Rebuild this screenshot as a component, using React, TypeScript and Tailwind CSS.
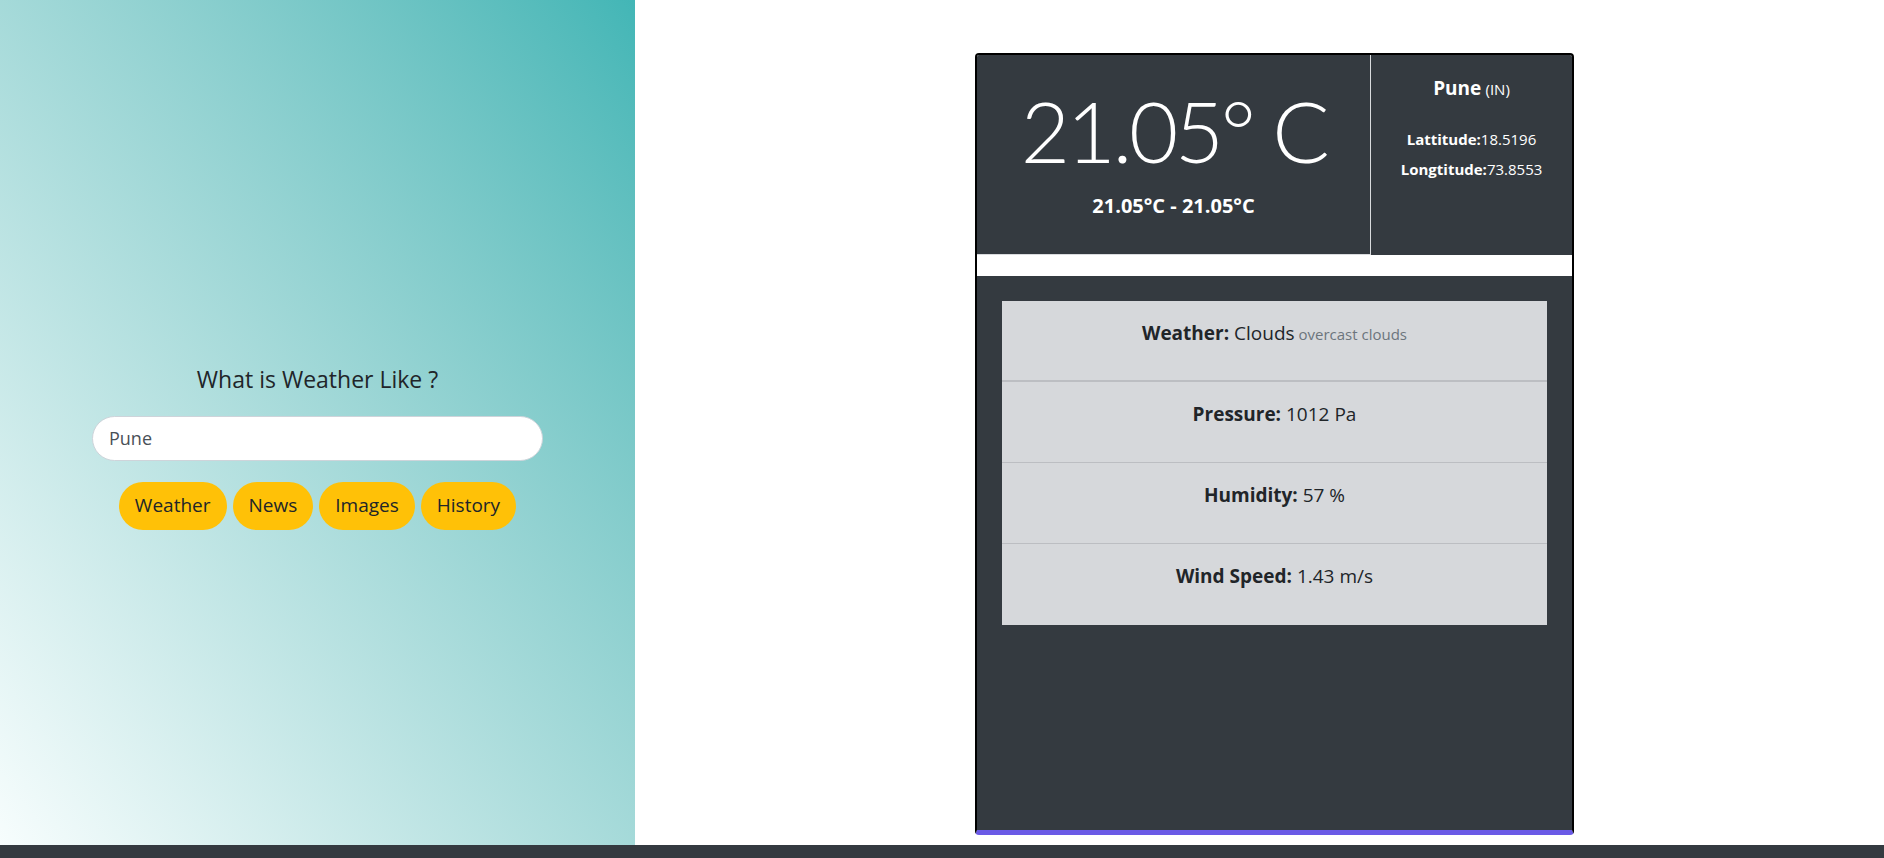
import { useState } from 'react'

const details = [
  { label: 'Weather:', value: 'Clouds', extra: 'overcast clouds' },
  { label: 'Pressure:', value: '1012 Pa' },
  { label: 'Humidity:', value: '57 %' },
  { label: 'Wind Speed:', value: '1.43 m/s' },
]

const actions = ['Weather', 'News', 'Images', 'History']

export default function App() {
  const [city, setCity] = useState('Pune')

  return (
    <div className="min-h-screen bg-white font-['Open_Sans','Noto_Sans',sans-serif] text-[#212529]">
      <div className="flex h-[845px]">
        {/* search side */}
        <div className="w-[635px] shrink-0 bg-linear-to-tr from-[#f7fdfd] to-[#42b6b6] flex flex-col items-center pt-[366px]">
          <h5 className="text-[23px] leading-[1.2] mb-[22px]">What is Weather Like ?</h5>
          <input
            value={city}
            onChange={(e) => setCity(e.target.value)}
            className="w-[451px] h-[45px] rounded-full bg-white border border-[#ced4da] px-4 text-[18px] text-[#495057] outline-none"
          />
          <div className="flex gap-[6px] mt-[21px]">
            {actions.map((a) => (
              <button
                key={a}
                className="h-[48px] px-4 rounded-full bg-[#ffc107] text-[19px] text-[#212529]"
              >
                {a}
              </button>
            ))}
          </div>
        </div>

        {/* result side */}
        <div className="flex-1 flex justify-center pl-[30px] pt-[53px]">
          <div className="w-[599px] h-[782px] flex flex-col border-2 border-black border-b-[5px] border-b-[#6a5ae6] rounded-[4px] bg-white overflow-hidden">
            <div className="flex h-[200px] text-white">
              <div className="w-[394px] bg-[#343a40] border-r border-b border-[#d9dbde] flex flex-col items-center pt-[24px]">
                <div className="font-['Lato','Open_Sans',sans-serif] font-light text-[85px] leading-[1.2] tracking-[-0.04em]">21.05° C</div>
                <div className="text-[20px] font-bold leading-[1.5] mt-[10px]">21.05°C - 21.05°C</div>
              </div>
              <div className="flex-1 bg-[#343a40] flex flex-col items-center pt-[19px]">
                <div className="leading-[1.5]">
                  <span className="text-[19px] font-bold">Pune</span>{' '}
                  <span className="text-[15px]">(IN)</span>
                </div>
                <div className="text-[15px] mt-[25px] leading-[1.5]">
                  <b>Lattitude:</b>18.5196
                </div>
                <div className="text-[15px] mt-[8px] leading-[1.5]">
                  <b>Longtitude:</b>73.8553
                </div>
              </div>
            </div>

            <div className="h-[21px]" />

            <div className="flex-1 bg-[#343a40] px-[25px] pt-[25px]">
              <ul className="bg-[#d6d8db] text-[#212529]">
                {details.map((d, i) => (
                  <li
                    key={d.label}
                    className={`h-[81px] pt-[18px] text-center text-[19px] leading-[1.5] ${
                      i === 0 ? 'border-b-2 border-[#bcbec2]' : i < 3 ? 'border-b border-[#bcbec2]' : ''
                    }`}
                  >
                    <b>{d.label}</b> {d.value}
                    {d.extra && <small className="text-[15px] text-[#6c757d]"> {d.extra}</small>}
                  </li>
                ))}
              </ul>
            </div>
          </div>
        </div>
      </div>
      <div className="h-[13px] bg-[#343a40]" />
    </div>
  )
}
